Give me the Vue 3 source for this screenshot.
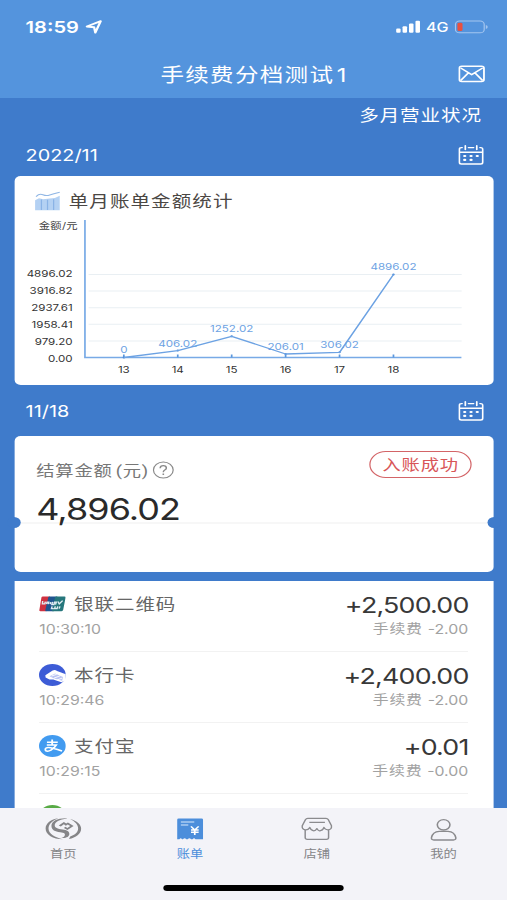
<script setup>
const baseline = 141.5
const plotHeight = 83
const maxValue = 4896.02

const yLabels = ['4896.02', '3916.82', '2937.61', '1958.41', '979.20', '0.00'].map((text, i) => ({
  text,
  y: 61 + i * 17
}))
const gridLines = [0, 1, 2, 3, 4].map((i) => baseline - plotHeight + i * 16.6)

const points = [
  { day: '13', value: 0, label: '0' },
  { day: '14', value: 406.02, label: '406.02' },
  { day: '15', value: 1252.02, label: '1252.02' },
  { day: '16', value: 206.01, label: '206.01' },
  { day: '17', value: 306.02, label: '306.02' },
  { day: '18', value: 4896.02, label: '4896.02' }
].map((p, i) => ({
  ...p,
  x: 89.6 + i * 44.25,
  y: baseline - (p.value / maxValue) * plotHeight
}))
const line = points.map((p) => `${p.x},${p.y}`).join(' ')

const records = [
  { icon: 'union', name: '银联二维码', time: '10:30:10', amount: '+2,500.00', feeName: '手续费', fee: '-2.00' },
  { icon: 'bank', name: '本行卡', time: '10:29:46', amount: '+2,400.00', feeName: '手续费', fee: '-2.00' },
  { icon: 'alipay', name: '支付宝', time: '10:29:15', amount: '+0.01', feeName: '手续费', fee: '-0.00' }
]
</script>

<template>
  <div class="screen">
    <header class="header">
      <div class="status">
        <span class="clock">18:59</span>
        <svg class="arrow" width="14" height="14" viewBox="0 0 14 14">
          <path d="M1.2 6.5 12.6 1.2 8.2 12.6 7.2 7.2Z" fill="none" stroke="#fff" stroke-width="1.9" stroke-linejoin="round" />
        </svg>
        <span class="grow"></span>
        <svg width="20" height="14" viewBox="0 0 20 14" fill="#fff">
          <rect x="0" y="8.4" width="3.7" height="4.4" rx="1" />
          <rect x="5.3" y="6.2" width="3.7" height="6.6" rx="1" />
          <rect x="10.6" y="3.6" width="3.7" height="9.2" rx="1" />
          <rect x="15.9" y="0.8" width="3.7" height="12" rx="1" />
        </svg>
        <span class="network">4G</span>
        <svg width="28" height="14" viewBox="0 0 28 14">
          <rect x="0.7" y="1" width="23.6" height="11.8" rx="3.4" fill="none" stroke="#a3c5ef" stroke-width="1" />
          <rect x="2.3" y="2.7" width="4.2" height="8.4" rx="1.4" fill="#e9503f" />
          <path d="M25.6 4.9q1.6.6 1.6 2t-1.6 2z" fill="#a3c5ef" />
        </svg>
      </div>
      <div class="titlebar">
        <h1 class="title">手续费分档测试<span class="digit">1</span></h1>
        <svg class="mail" width="22" height="18" viewBox="0 0 22 18" fill="none" stroke="#fff" stroke-width="1.5" stroke-linejoin="round">
          <rect x="0.9" y="1.2" width="20.2" height="15.2" rx="2" />
          <path d="M2 3 11 9.7 20 3M2 15.4 8.2 8M20 15.4 13.8 8" />
        </svg>
      </div>
    </header>

    <div class="link-row">多月营业状况</div>

    <div class="date-row first">
      <span>2022/11</span>
      <svg class="calendar" width="21" height="20" viewBox="0 0 21 20">
        <use href="#calendar-shape" />
      </svg>
    </div>

    <section class="card chart-card">
      <div class="chart-head">
        <svg width="22" height="20" viewBox="0 0 22 20">
          <path d="M.8 9.2 4 7.2 7.4 8.3 12.8 7.5 17 7 21 4.8V19.2H.8z" fill="#b4d1f3" />
          <path d="M6 8.6V19M11 8.8V19M16 8.2V19" stroke="#8ab3e6" stroke-width="1" />
          <path d="M1.6 5.6Q4.3 2.3 7.2 3.8T12.8 4 21 1.2" fill="none" stroke="#91b7e5" stroke-width="1" />
        </svg>
        <h2 class="chart-title">单月账单金额统计</h2>
      </div>
      <svg class="chart" width="393.5" height="169" viewBox="0 0 393.5 169">
        <text class="unit" x="19.8" y="13">金额/元</text>
        <line v-for="y in gridLines" :key="y" x1="60.7" x2="366.8" :y1="y" :y2="y" stroke="#e9eff3" stroke-width="1" />
        <text v-for="l in yLabels" :key="l.text" class="axis-label" x="47.6" :y="l.y" text-anchor="end">{{ l.text }}</text>
        <path d="M57.7 4V141.5H366.6" fill="none" stroke="#78aae6" stroke-width="1.4" />
        <g v-for="p in points" :key="p.day">
          <line :x1="p.x" :x2="p.x" y1="138.5" y2="141.5" stroke="#5b98de" stroke-width="1.4" />
          <text class="axis-label" :x="p.x" y="156.7" text-anchor="middle">{{ p.day }}</text>
          <text class="value-label" :x="p.x" :y="p.y - 4" text-anchor="middle">{{ p.label }}</text>
          <circle :cx="p.x" :cy="p.y" r="1" fill="#4b8ad8" />
        </g>
        <polyline :points="line" fill="none" stroke="#6ca2e3" stroke-width="1.3" stroke-linejoin="round" />
      </svg>
    </section>

    <div class="date-row second">
      <span>11/18</span>
      <svg class="calendar" width="21" height="20" viewBox="0 0 21 20">
        <g id="calendar-shape" fill="none" stroke="#fff" stroke-width="1.4" stroke-linecap="round">
          <path d="M3.2 2.6H2.6Q.9 2.6.9 4.4V17.2Q.9 19 2.6 19H18.4Q20.1 19 20.1 17.2V4.4Q20.1 2.6 18.4 2.6H17.8M8.4 2.6H12.6M1 7.2H20M5.8 .8V4.6M15.2 .8V4.6" />
          <path d="M5 11h.6M10.2 11h.6M15.3 11h.6M5 14.9h.6M10.2 14.9h.6" stroke-width="2.1" />
        </g>
      </svg>
    </div>

    <section class="card settle-card">
      <div class="settle-top">
        <div>
          <div class="settle-label">
            <span>结算金额<i class="paren open">(</i>元<i class="paren">)</i></span>
            <svg width="18" height="18" viewBox="0 0 18 18" fill="none" stroke="#8a8a8a" stroke-width="1">
              <circle cx="9" cy="9" r="8.1" />
              <path d="M6.4 7.2Q6.5 4.6 9 4.6T11.5 6.9Q11.5 8.1 10.2 8.9T9 11.2" stroke-width="1.2" />
              <path d="M9 12.6V13.9" stroke-width="1.3" />
            </svg>
          </div>
          <div class="settle-amount">4,896.02</div>
        </div>
        <span class="badge">入账成功</span>
      </div>
      <i class="notch left"></i>
      <i class="notch right"></i>
    </section>

    <section class="list">
      <div v-for="r in records" :key="r.time" class="record">
        <div class="main">
          <svg v-if="r.icon === 'union'" class="icon" width="22" height="22" viewBox="0 0 22 22">
            <path d="M3.2 3.6H9L6 18.2H1.3Q0 18.2.3 17L2 4.6Q2.2 3.6 3.2 3.6Z" fill="#cf3140" />
            <path d="M8.6 3.6H15L12 18.2H5.8Q5 18.2 5.2 17L7.6 4.5Q7.8 3.6 8.6 3.6Z" fill="#20558f" />
            <path d="M14.3 3.6H20.9Q22 3.6 21.8 4.8L19.8 17.1Q19.6 18.2 18.5 18.2H11.2Q10.5 18.2 10.7 17L13.2 4.5Q13.4 3.6 14.3 3.6Z" fill="#26777c" />
            <path d="M3 8 2.8 10.8H4.8L5.2 8.6M6.2 11 6.6 9.2H8L7.6 11.2M9.6 9.2 9.2 11.2M11.2 8.8 10.5 11.7H12.2L12.8 9.1H14.2L13.5 11.6M15.5 8.6 16.6 11 19.4 7.6M10.8 13.4 10.2 15.7H12.1M13.4 13.3 12.8 15.7H14.8L15.4 13.3M17.2 13.3 16.5 15.7" fill="none" stroke="#e2edf3" stroke-width="1.2" />
          </svg>
          <svg v-else-if="r.icon === 'bank'" class="icon" width="22" height="22" viewBox="0 0 22 22">
            <circle cx="11" cy="11" r="11" fill="#3d5cd6" />
            <path d="M5.2 11.2 11.2 6.6Q13 5.4 14.8 7L22 10.3V13.6L21 16.7 18.4 18.3 11.7 15.5H8.6L5.4 13.4Z" fill="#fff" />
            <path d="M8.6 12.2 13.2 9.4 19.7 13 19 16.7 12.4 14.6Z" fill="#bac4f3" />
            <path d="M10.4 12 14.5 10.3M12.2 14.2 17.3 11.8M14.8 16 19 14.1" stroke="#fff" stroke-width=".8" />
          </svg>
          <svg v-else class="icon" width="22" height="22" viewBox="0 0 22 22">
            <circle cx="11" cy="11" r="11" fill="#429bf0" />
            <path d="M6.5 7.2H15.4M10.8 4.5V9.8M6.4 9.9H14.2Q12.5 13.4 9.8 15.2T5.4 15.6Q4.5 12.9 7.4 12.4 10.4 12.2 18.9 16" fill="none" stroke="#fff" stroke-width="1.5" />
          </svg>
          <span class="name">{{ r.name }}</span>
          <span class="amount">{{ r.amount }}</span>
        </div>
        <div class="sub">
          <span class="time">{{ r.time }}</span>
          <span class="fee"><span class="fee-name">{{ r.feeName }}</span>{{ r.fee }}</span>
        </div>
      </div>
      <div class="record next">
        <svg class="icon" width="22" height="22" viewBox="0 0 22 22"><circle cx="11" cy="11" r="11" fill="#58aa45" /></svg>
      </div>
    </section>

    <nav class="tabs">
      <div class="tab-items">
        <div class="tab">
          <svg width="30" height="24" viewBox="0 0 30 24" fill="#858588">
            <path d="M10.8 1.2C4.8 2.2.4 6.4.4 11.4.4 17.6 6.4 22 14.6 22.2 8.2 20.8 2.8 16.9 2.8 11.6 2.8 7.2 5.8 3.8 10.8 1.2Z" />
            <path d="M20.6 1.9C26.2 3.8 29.6 7.4 29.6 11.6 29.6 16.9 25.3 20.9 19.6 22.1L20.6 19.4C24.6 17.6 27.1 15.1 27.1 11.4 27.1 7.6 24.7 4.5 20.6 1.9Z" />
            <path d="M18.2 1.4C10.6.9 5.2 4.2 5.2 8.8 5.2 13 8.2 14.8 12.4 15.3 15.8 15.7 16.6 16.6 16.2 18.2 15.9 19.6 14.8 20.4 13 20.8 17.2 21.4 19.9 19.6 19.9 16.9 19.9 14.3 18 13.2 14.4 12.5 10.2 11.7 7.9 10.9 7.9 8.2 7.9 5 11.6 2.4 18.2 1.4Z" />
            <path d="M11.2 8.4 15.4 5 17.3 6.4 18.7 5.4 23.4 9.1 18.3 13 15.4 10.9 16.7 9.7 18.3 10.9 20.6 9.1 18.6 7.6 17 8.7 15.4 7.3 12.9 9.4Z" />
          </svg>
          <span>首页</span>
        </div>
        <div class="tab active">
          <svg width="22" height="24" viewBox="0 0 22 24">
            <path d="M1.6 1.5H20.4Q21.6 1.5 21.6 2.7V22.3H15.4Q14.3 20 12.9 22.3H11.8Q10.4 20 9 22.3H7.9Q6.5 20 5.1 22.3H4.4Q3.2 20 2.2 22.3H.4V2.7Q.4 1.5 1.6 1.5Z" fill="#4c8edb" />
            <path d="M3.4 4.9H14.4M3.4 8H9.5" stroke="#a9cbf2" stroke-width="1.5" />
            <path d="M11.7 9.4 14.8 13 18 9.4M11.7 13H18M11.7 15.3H18M14.8 13V18" fill="none" stroke="#fff" stroke-width="1.4" />
          </svg>
          <span>账单</span>
        </div>
        <div class="tab">
          <svg width="26" height="24" viewBox="0 0 26 24" fill="none" stroke="#8b8b8e" stroke-width="1.2" stroke-linejoin="round">
            <path d="M5.5 1.3H20.5Q21.7 1.3 22.3 2.6L25 8.8Q25.4 12.7 22 12.8 19.7 12.8 18.8 10.4 17.7 14 15.2 13.8 13.9 13.6 13 11.5 12 13.8 10.5 13.8 8.2 13.8 7.2 10.4 6 12.9 3.8 12.8 .5 12.4 1 8.8L3.7 2.6Q4.2 1.3 5.5 1.3Z" />
            <path d="M3.4 13V20.6Q3.4 22.4 5.2 22.4H20.8Q22.6 22.4 22.6 20.6V13M6.8 5.3H19.6" />
          </svg>
          <span>店铺</span>
        </div>
        <div class="tab">
          <svg width="22" height="24" viewBox="0 0 22 24" fill="none" stroke="#8b8b8e" stroke-width="1.3">
            <circle cx="11" cy="7.8" r="5.2" />
            <path d="M7.4 14.4H14.6Q20 14.8 21 20.7 21.2 23 19 23H3Q.8 23 1 20.7 2 14.8 7.4 14.4Z" />
          </svg>
          <span>我的</span>
        </div>
      </div>
      <div class="home-bar"></div>
    </nav>
  </div>
</template>

<style>
body {
  background: #3f7bcb;
  overflow: hidden;
}
</style>

<style scoped>
/* The layout is 416 units wide and widened to fill the viewport. */
.screen {
  width: 416px;
  height: 900px;
  display: flex;
  flex-direction: column;
  overflow: hidden;
  transform: scaleX(1.21875);
  transform-origin: 0 0;
  background: #3f7bcb;
  color: #fff;
  font-family: Inter, "Noto Sans CJK SC", sans-serif;
}
.screen > * {
  flex-shrink: 0;
}
svg {
  display: block;
  flex-shrink: 0;
}
i {
  font-style: normal;
}
.header {
  height: 98px;
  background: #5494dd;
}
.status {
  height: 46px;
  padding: 4px 15px 0 21px;
  display: flex;
  align-items: center;
}
.clock {
  font-size: 16.5px;
  font-weight: 600;
}
.arrow {
  margin-left: 5px;
}
.grow {
  flex: 1;
}
.network {
  margin: 0 5px 0 4.5px;
  font-size: 13.2px;
  font-weight: 500;
}
.titlebar {
  height: 48px;
  padding: 0 18.2px 0 17.5px;
  display: grid;
  grid-template-columns: 22px 1fr 22px;
  align-items: center;
}
.title {
  grid-column: 2;
  margin: 0;
  padding: 1px 0 0 1.5px;
  text-align: center;
  font-size: 19.3px;
  line-height: 28px;
  font-weight: 400;
  letter-spacing: 1.1px;
}
.digit {
  margin-left: 2px;
}
.link-row {
  height: 34px;
  padding-right: 20.5px;
  line-height: 34px;
  text-align: right;
  font-size: 16px;
  letter-spacing: 0.8px;
}
.date-row {
  padding: 0 19.3px 0 21px;
  display: flex;
  align-items: center;
  justify-content: space-between;
  font-size: 16.3px;
}
.first {
  height: 44px;
  padding-top: 2px;
  box-sizing: border-box;
}
.second {
  height: 51px;
}
.card {
  margin: 0 11.3px 0 11.5px;
  background: #fff;
  border-radius: 5px;
  color: #333;
}
.chart-card {
  height: 209px;
}
.chart-head {
  height: 40px;
  padding: 9px 0 0 16.4px;
  box-sizing: border-box;
  display: flex;
  align-items: center;
}
.chart-title {
  margin: -1px 0 0 6.5px;
  font-size: 16px;
  font-weight: 400;
  letter-spacing: 0.9px;
  color: #4b4744;
}
.unit {
  font-size: 9.3px;
  letter-spacing: 0.2px;
  fill: #444;
}
.axis-label {
  font-size: 9.5px;
  fill: #333;
}
.value-label {
  font-size: 9.5px;
  fill: #6ca2e3;
}
.settle-card {
  position: relative;
  height: 136px;
}
.settle-top {
  height: 88px;
  padding: 14px 17.5px 0 18.2px;
  box-sizing: border-box;
  border-bottom: 2px solid #f7f7f7;
  display: flex;
  justify-content: space-between;
  align-items: flex-start;
}
.settle-label {
  height: 40px;
  display: flex;
  align-items: center;
  gap: 3.5px;
  color: #777;
  font-size: 15px;
  letter-spacing: 0.7px;
}
.settle-label span {
  margin-top: -2px;
}
.paren {
  font-family: Roboto, sans-serif;
  letter-spacing: 0;
}
.open {
  margin: 0 0.5px 0 2.5px;
}
.settle-amount {
  height: 36px;
  line-height: 38px;
  font-size: 29.5px;
  letter-spacing: -0.75px;
  color: #2a2a2a;
}
.badge {
  width: 84px;
  height: 27px;
  margin-top: 1px;
  box-sizing: border-box;
  border: 1.2px solid #d36467;
  border-radius: 14px;
  line-height: 25px;
  text-align: center;
  font-size: 15px;
  letter-spacing: 0.7px;
  color: #d85558;
}
.notch {
  position: absolute;
  top: 81px;
  width: 11px;
  height: 11px;
  border-radius: 50%;
  background: #3f7bcb;
}
.left {
  left: -6px;
}
.right {
  right: -6px;
}
.list {
  height: 227px;
  margin: 9px 11.3px 0 11.5px;
  padding: 0 20.5px 0 20.7px;
  box-sizing: border-box;
  overflow: hidden;
  background: #fff;
}
.record {
  height: 71px;
  padding-top: 10px;
  box-sizing: border-box;
  border-bottom: 1px solid #f2f2f2;
}
.main {
  height: 27px;
  display: flex;
  align-items: center;
}
.main .icon {
  margin-top: -1px;
}
.name {
  margin: -3px 0 0 6.5px;
  font-size: 16px;
  letter-spacing: 0.8px;
  color: #666;
}
.amount {
  margin: 0 -0.3px 0 auto;
  font-size: 22px;
  letter-spacing: -0.65px;
  color: #383838;
}
.sub {
  height: 22px;
  display: flex;
  align-items: center;
  justify-content: space-between;
  font-size: 13px;
  line-height: 20px;
  color: #a2a2a2;
}
.fee {
  display: flex;
  align-items: center;
}
.fee-name {
  margin: -2px 4px 0 0;
  letter-spacing: 0.7px;
}
.next {
  padding-top: 11px;
  border: 0;
}
.tabs {
  height: 92px;
  background: #f3f3f8;
}
.tab-items {
  height: 77px;
  padding-top: 9px;
  box-sizing: border-box;
  display: grid;
  grid-template-columns: repeat(4, 1fr);
}
.tab {
  display: flex;
  flex-direction: column;
  align-items: center;
  font-size: 10.9px;
  color: #858588;
}
.tab span {
  margin-top: 5px;
  line-height: 17px;
}
.tab.active {
  color: #4c8edb;
}
.home-bar {
  width: 148px;
  height: 6px;
  margin: 0 auto;
  border-radius: 3px;
  background: #000;
}
</style>
